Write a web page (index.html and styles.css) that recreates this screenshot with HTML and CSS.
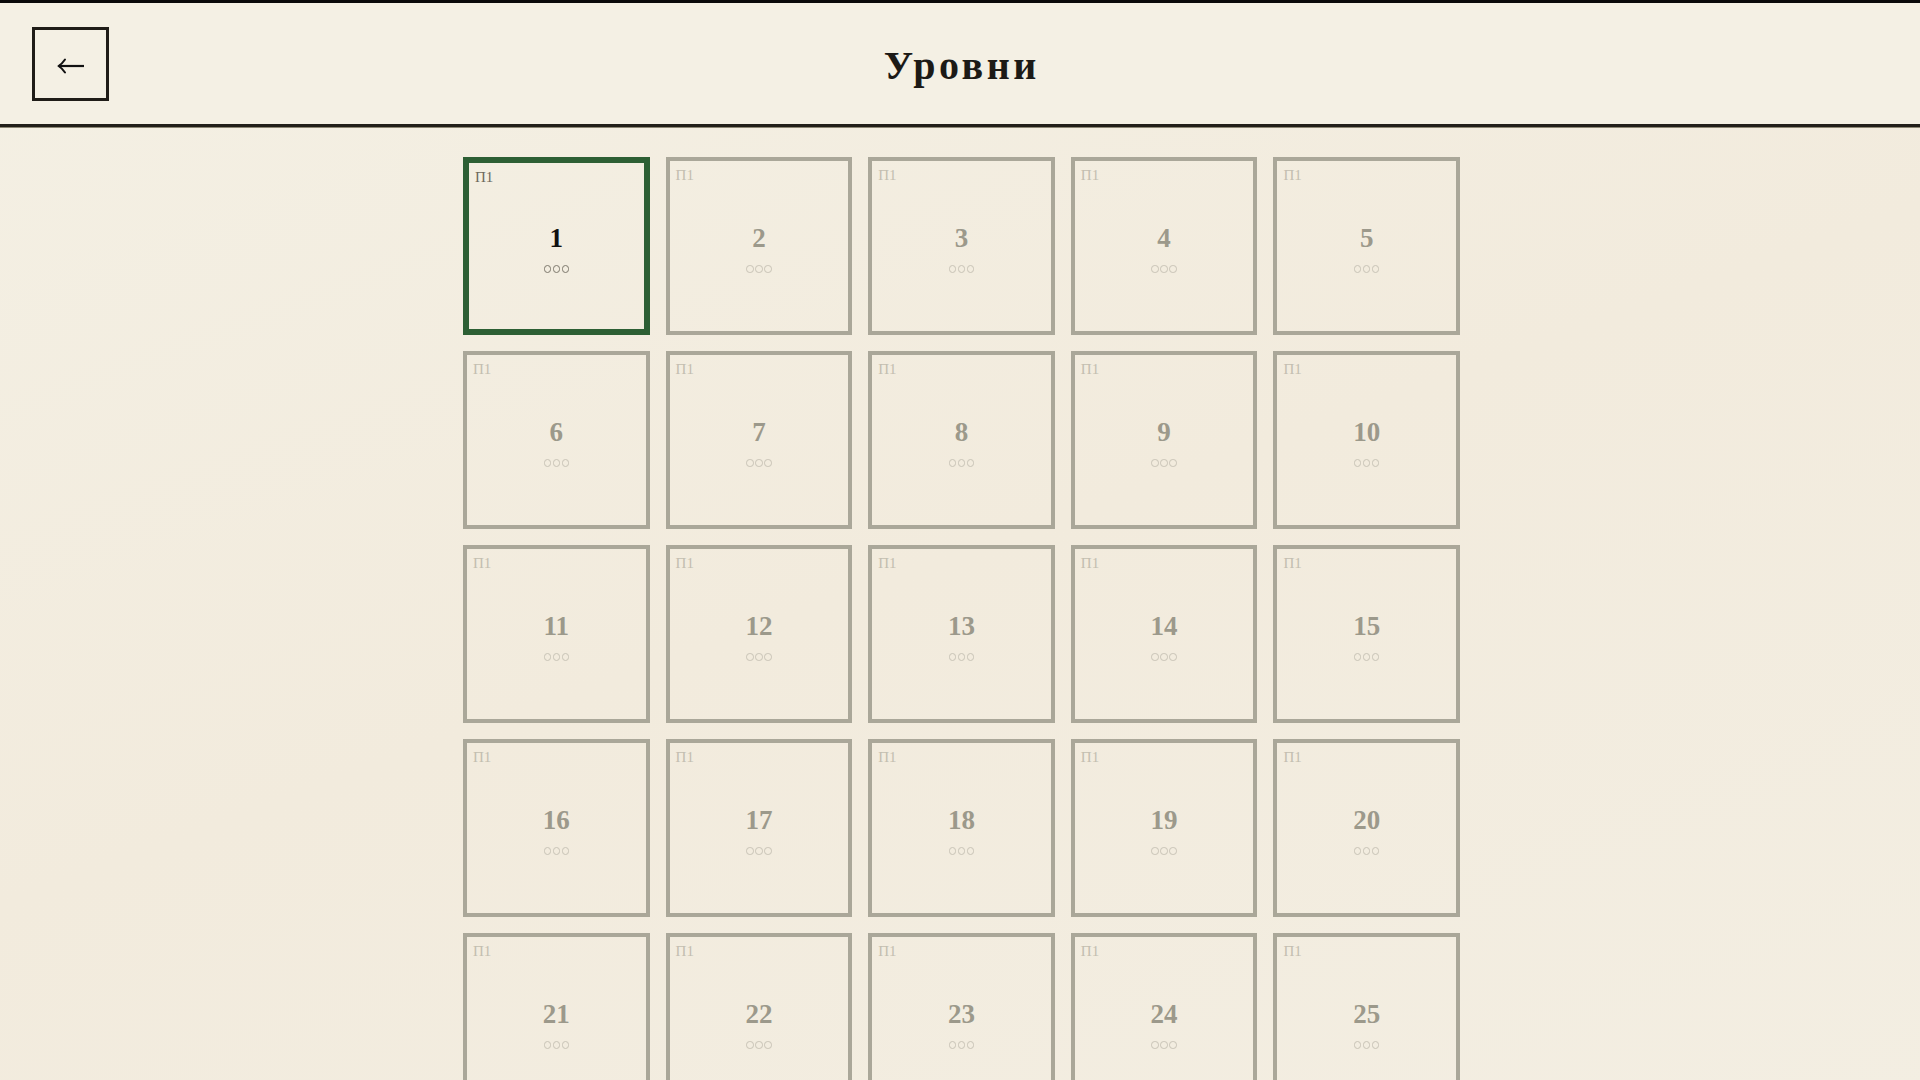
FILE: index.html
```html
<!DOCTYPE html>
<html lang="ru">
<head>
<meta charset="utf-8">
<title>Уровни</title>
<link rel="stylesheet" href="styles.css">
</head>
<body>
<header class="topbar">
  <div class="topbar-left">
    <button class="back-btn" type="button" aria-label="Назад">
      <svg class="back-icon" width="28" height="16" viewBox="0 0 28 16" aria-hidden="true">
        <path d="M2 8 H27" fill="none" stroke="#111" stroke-width="2.2"/>
        <path d="M8 1.5 Q5 6 1.5 8 Q5 10 8 14.5" fill="none" stroke="#111" stroke-width="2" stroke-linecap="round" stroke-linejoin="round"/>
      </svg>
    </button>
  </div>
  <h1 class="title">Уровни</h1>
  <div class="topbar-right"></div>
</header>
<main class="content">
  <div class="levels">
    <div class="level current"><span class="tag">П1</span><span class="num">1</span><span class="dots"><i></i><i></i><i></i></span></div>
    <div class="level"><span class="tag">П1</span><span class="num">2</span><span class="dots"><i></i><i></i><i></i></span></div>
    <div class="level"><span class="tag">П1</span><span class="num">3</span><span class="dots"><i></i><i></i><i></i></span></div>
    <div class="level"><span class="tag">П1</span><span class="num">4</span><span class="dots"><i></i><i></i><i></i></span></div>
    <div class="level"><span class="tag">П1</span><span class="num">5</span><span class="dots"><i></i><i></i><i></i></span></div>
    <div class="level"><span class="tag">П1</span><span class="num">6</span><span class="dots"><i></i><i></i><i></i></span></div>
    <div class="level"><span class="tag">П1</span><span class="num">7</span><span class="dots"><i></i><i></i><i></i></span></div>
    <div class="level"><span class="tag">П1</span><span class="num">8</span><span class="dots"><i></i><i></i><i></i></span></div>
    <div class="level"><span class="tag">П1</span><span class="num">9</span><span class="dots"><i></i><i></i><i></i></span></div>
    <div class="level"><span class="tag">П1</span><span class="num">10</span><span class="dots"><i></i><i></i><i></i></span></div>
    <div class="level"><span class="tag">П1</span><span class="num">11</span><span class="dots"><i></i><i></i><i></i></span></div>
    <div class="level"><span class="tag">П1</span><span class="num">12</span><span class="dots"><i></i><i></i><i></i></span></div>
    <div class="level"><span class="tag">П1</span><span class="num">13</span><span class="dots"><i></i><i></i><i></i></span></div>
    <div class="level"><span class="tag">П1</span><span class="num">14</span><span class="dots"><i></i><i></i><i></i></span></div>
    <div class="level"><span class="tag">П1</span><span class="num">15</span><span class="dots"><i></i><i></i><i></i></span></div>
    <div class="level"><span class="tag">П1</span><span class="num">16</span><span class="dots"><i></i><i></i><i></i></span></div>
    <div class="level"><span class="tag">П1</span><span class="num">17</span><span class="dots"><i></i><i></i><i></i></span></div>
    <div class="level"><span class="tag">П1</span><span class="num">18</span><span class="dots"><i></i><i></i><i></i></span></div>
    <div class="level"><span class="tag">П1</span><span class="num">19</span><span class="dots"><i></i><i></i><i></i></span></div>
    <div class="level"><span class="tag">П1</span><span class="num">20</span><span class="dots"><i></i><i></i><i></i></span></div>
    <div class="level"><span class="tag">П1</span><span class="num">21</span><span class="dots"><i></i><i></i><i></i></span></div>
    <div class="level"><span class="tag">П1</span><span class="num">22</span><span class="dots"><i></i><i></i><i></i></span></div>
    <div class="level"><span class="tag">П1</span><span class="num">23</span><span class="dots"><i></i><i></i><i></i></span></div>
    <div class="level"><span class="tag">П1</span><span class="num">24</span><span class="dots"><i></i><i></i><i></i></span></div>
    <div class="level"><span class="tag">П1</span><span class="num">25</span><span class="dots"><i></i><i></i><i></i></span></div>
  </div>
</main>
</body>
</html>
```

FILE: styles.css
```css
html, body {
  margin: 0;
  padding: 0;
}

body {
  min-height: 100vh;
  background: linear-gradient(160deg, #f4f0e4 0%, #f2ebdd 50%, #f3eee2 100%);
  font-family: "Liberation Serif", "Times New Roman", serif;
  color: #1c1a16;
  overflow: hidden;
}

.topbar {
  display: grid;
  grid-template-columns: 1fr auto 1fr;
  align-items: center;
  height: 121px;
  padding: 0 32px;
  background: #f4f0e4;
  border-top: 3px solid #0a0a0a;
  border-bottom: 3px solid #221f19;
  box-shadow: 0 1px 0 #8c8774;
}

.topbar-left {
  display: flex;
  align-items: center;
}

.back-btn {
  box-sizing: border-box;
  width: 77px;
  height: 74px;
  border: 3px solid #1f1c17;
  background: transparent;
  padding: 4px 0 0 0;
  display: flex;
  align-items: center;
  justify-content: center;
}

.back-icon {
  display: block;
}

.title {
  margin: 0;
  font-size: 40px;
  font-weight: 700;
  letter-spacing: 3.5px;
  padding-left: 3.5px;
  color: #1c1a16;
  line-height: 1;
  padding-top: 4px;
}

.content {
  padding: 30px 0 0 3px;
  display: flex;
  justify-content: center;
}

.levels {
  width: 997px;
  display: grid;
  grid-template-columns: repeat(5, 1fr);
  grid-auto-rows: 178px;
  gap: 16px;
}

.level {
  position: relative;
  box-sizing: border-box;
  border: 4px solid #aaa799;
  display: flex;
  flex-direction: column;
  align-items: center;
  justify-content: center;
  padding-top: 4px;
}

.level.current {
  border: 6px solid #2d5f34;
}

.tag {
  position: absolute;
  top: 5px;
  left: 6px;
  font-size: 15px;
  line-height: 18px;
  color: #c3beb0;
}

.current .tag {
  color: #6d695d;
}

.num {
  font-size: 27px;
  font-weight: 700;
  line-height: 30px;
  color: #9c998b;
}

.current .num {
  color: #111;
}

.dots {
  display: flex;
  gap: 1.5px;
  margin-top: 12px;
}

.dots i {
  display: block;
  box-sizing: border-box;
  width: 7.5px;
  height: 7.5px;
  border: 1.3px solid #c8c3b6;
  border-radius: 50%;
}

.current .dots i {
  border-color: #7d786c;
}
```
